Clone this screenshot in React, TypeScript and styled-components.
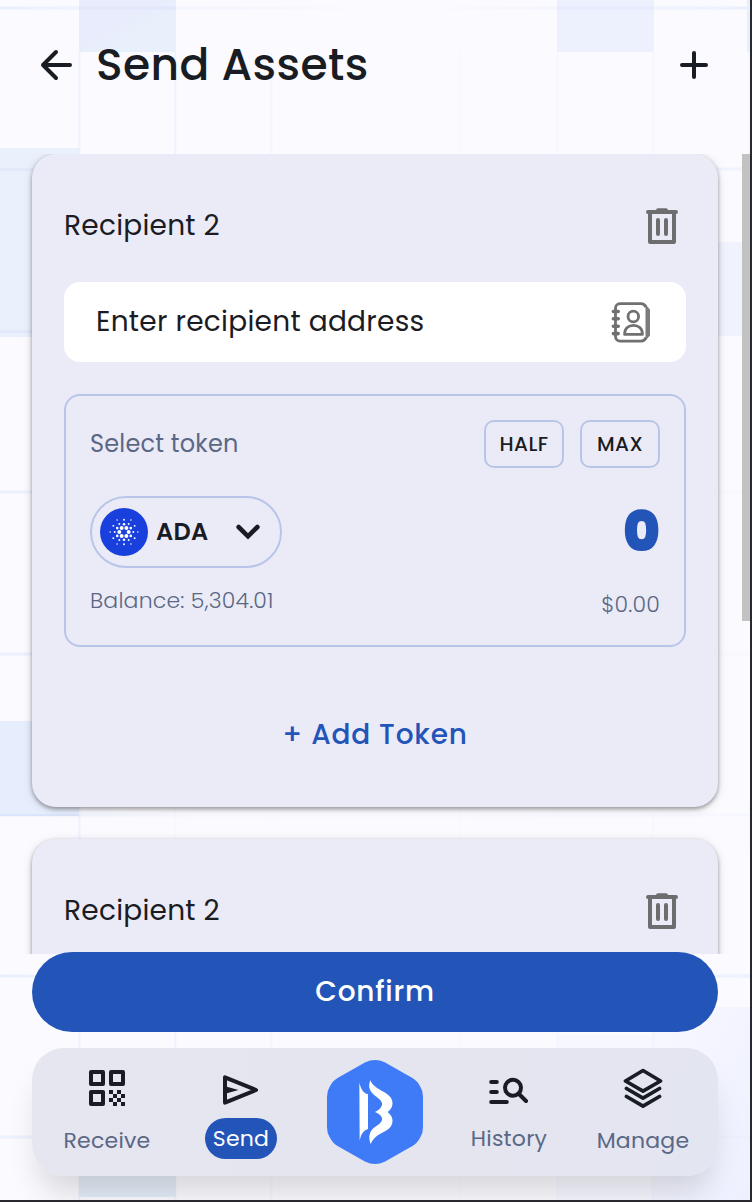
import React from "react";
import styled, { createGlobalStyle } from "styled-components";

const GlobalStyle = createGlobalStyle`
  * { box-sizing: border-box; }
  body { margin: 0; background: #27292e; overflow: hidden; }
`;

const ink = "#1a1c23";
const muted = "#5a6785";
const primary = "#2355b9";
const outline = "#b9c5e8";

const Frame = styled.div`
  width: 752px;
  height: 1202px;
  padding: 0 2px 2px 0;
  background: #27292e;
  font-family: Poppins, "Open Sans", sans-serif;
  color: ${ink};
`;

const Screen = styled.main`
  position: relative;
  display: flex;
  flex-direction: column;
  width: 750px;
  height: 1200px;
  overflow: hidden;
  background: #fafaff;
  isolation: isolate;
`;

const Backdrop = styled.svg`
  position: absolute;
  inset: 0;
  z-index: -1;
`;

const Text = styled.span<{ $size: number; $weight?: number; $track?: number; $color?: string }>`
  font-size: ${(p) => p.$size}px;
  font-weight: ${(p) => p.$weight ?? 400};
  letter-spacing: ${(p) => p.$track ?? 0}px;
  color: ${(p) => p.$color ?? ink};
  line-height: 1.5;
  white-space: nowrap;
`;

const Header = styled.header`
  display: flex;
  align-items: center;
  flex: 0 0 154px;
  padding: 0 40px 24px;
`;

const Title = styled.h1`
  flex: 1;
  margin: 0 0 0 23px;
  font-size: 44px;
  font-weight: 500;
  letter-spacing: 0.4px;
  line-height: 66px;
`;

const IconButton = styled.button`
  display: flex;
  padding: 0;
  border: 0;
  background: none;
  color: inherit;
`;

const ScrollArea = styled.section`
  display: flex;
  justify-content: space-between;
  flex: 0 0 800px;
  overflow: hidden;
`;

const CardList = styled.div`
  display: flex;
  flex-direction: column;
  gap: 32px;
  width: 686px;
  margin-left: 32px;
`;

const ScrollThumb = styled.div`
  width: 8px;
  height: 467px;
  background: #c2c2c2;
`;

const Card = styled.article`
  flex: 0 0 653px;
  display: flex;
  flex-direction: column;
  padding: 40px 32px 0;
  border-radius: 24px;
  background: #ebebf7;
  box-shadow: 0 2px 4px rgba(0, 0, 0, 0.36), 0 2px 12px rgba(0, 0, 0, 0.1);
`;

const CardHead = styled.div`
  display: flex;
  align-items: center;
  justify-content: space-between;
  height: 64px;
  padding-right: 8px;
  margin-bottom: 24px;
`;

const AddressField = styled.div`
  display: flex;
  align-items: center;
  justify-content: space-between;
  height: 80px;
  padding: 0 34px 0 32px;
  border-radius: 16px;
  background: #fff;
`;

const TokenBox = styled.div`
  display: flex;
  flex-direction: column;
  height: 253px;
  margin-top: 32px;
  padding: 24px;
  border: 2px solid ${outline};
  border-radius: 16px;
`;

const Row = styled.div<{ $height: number; $top?: number }>`
  display: flex;
  align-items: center;
  justify-content: space-between;
  height: ${(p) => p.$height}px;
  margin-top: ${(p) => p.$top ?? 0}px;
`;

const Presets = styled.div`
  display: flex;
  gap: 16px;
`;

const PresetButton = styled.button`
  display: flex;
  align-items: center;
  justify-content: center;
  width: 80px;
  height: 48px;
  padding: 0;
  border: 2px solid ${outline};
  border-radius: 10px;
  background: none;
  font: inherit;
`;

const TokenSelect = styled.button`
  display: flex;
  align-items: center;
  width: 192px;
  height: 72px;
  padding: 0 20px 0 8px;
  border: 2px solid ${outline};
  border-radius: 36px;
  background: none;
  font: inherit;
`;

const TokenName = styled.span`
  flex: 1;
  display: flex;
  padding-left: 8px;
`;

const AddToken = styled.button`
  align-self: center;
  display: flex;
  align-items: center;
  height: 64px;
  margin-top: 56px;
  padding: 0;
  border: 0;
  background: none;
  font: inherit;
`;

const Confirm = styled.button`
  display: flex;
  align-items: center;
  justify-content: center;
  flex: 0 0 80px;
  margin: -2px 32px 16px;
  padding: 0;
  border: 0;
  border-radius: 40px;
  background: ${primary};
  font: inherit;
  z-index: 1;
`;

const NavBar = styled.nav`
  display: grid;
  grid-template-columns: repeat(5, 134px);
  justify-content: center;
  flex: 0 0 128px;
  margin: 0 32px;
  border-radius: 32px;
  background: linear-gradient(100deg, #e5e6f0, #e5e5ef 60%, #e3e5f1);
  box-shadow: 0 24px 32px -8px rgba(0, 0, 0, 0.15);
`;

const NavItem = styled.a<{ $drop?: number }>`
  display: flex;
  flex-direction: column;
  align-items: center;
  padding-top: ${(p) => 20 + (p.$drop ?? 0)}px;
`;

const NavLabel = styled.span<{ $active?: boolean; $top: number }>`
  display: flex;
  align-items: center;
  justify-content: center;
  width: ${(p) => (p.$active ? "72px" : "auto")};
  height: 41px;
  margin-top: ${(p) => p.$top}px;
  border-radius: 20.5px;
  background: ${(p) => (p.$active ? primary : "none")};
`;

const NavLogo = styled.a`
  display: flex;
  justify-content: center;
  padding-top: 12px;
`;

function GridArt() {
  const columns = [79, 175, 271, 460, 557, 653, 749];
  const columnStrength = [0.9, 0.8, 0.45, 0.2, 0.35, 0.5, 0.5];
  const rows = [8, 169, 492, 654, 815, 976, 1137];
  const rightStrength = [1, 0.7, 0.15, 0.15, 0.25, 0.9, 0.9];
  return (
    <Backdrop width="750" height="1200" viewBox="0 0 750 1200">
      <defs>
        <linearGradient id="cell" x1="0" y1="0" x2="1" y2="1">
          <stop offset="0.4" stopColor="#e8ecfc" />
          <stop offset="0.6" stopColor="#e8f0fb" />
        </linearGradient>
        <linearGradient id="fadeLeft" x1="0" y1="0" x2="1" y2="0">
          <stop offset="0" stopColor="#ebf0fd" />
          <stop offset="0.4" stopColor="#ebf0fd" stopOpacity="0.6" />
          <stop offset="1" stopColor="#ebf0fd" stopOpacity="0" />
        </linearGradient>
        <linearGradient id="fadeRight" x1="0" y1="0" x2="1" y2="0">
          <stop offset="0" stopColor="#ebf0fd" stopOpacity="0" />
          <stop offset="0.6" stopColor="#ebf0fd" stopOpacity="0.6" />
          <stop offset="1" stopColor="#ebf0fd" />
        </linearGradient>
        <linearGradient id="corner" x1="0" y1="0" x2="1" y2="1">
          <stop offset="0" stopColor="#f8f8ff" />
          <stop offset="1" stopColor="#edf0ff" />
        </linearGradient>
      </defs>
      <rect x="557" y="1035" width="193" height="165" fill="#f7f7ff" />
      <rect x="651" y="1007" width="99" height="193" fill="url(#corner)" />
      {columns.map((x, i) => (
        <g key={x} fill="#eff2fe" opacity={columnStrength[i]}>
          <rect x={x - 1} y="52" width="2.5" height="110" />
          <rect x={x - 1} y="800" width="2.5" height="50" opacity={i === 0 ? 1 : 0.2} />
          <rect x={x - 1} y="1020" width="2.5" height="180" />
        </g>
      ))}
      {rows.map((y, i) => (
        <g key={y}>
          <rect y={y - 1.5} width={y === 815 ? 200 : 375} height="3" fill="url(#fadeLeft)" />
          <rect x="420" y={y - 1.5} width="330" height="3" fill="url(#fadeRight)" opacity={rightStrength[i]} />
        </g>
      ))}
      <rect x="79" width="97" height="52" fill="url(#cell)" />
      <rect x="79" y="6.5" width="97" height="3" fill="#e0e7fa" />
      <rect x="557" width="97" height="52" fill="#edf1fe" />
      <rect x="557" y="6.5" width="97" height="3" fill="#e5ebfd" />
      <rect x="747" width="3" height="52" fill="#e6effd" />
      <rect y="148" width="80" height="189" fill="#eaf0fc" />
      <rect y="168" width="80" height="3" fill="#e1e9fb" />
      <rect y="330" width="80" height="3" fill="#e1e9fb" />
      <rect x="700" y="242" width="50" height="94" fill="#f0f2fe" />
      <rect y="721" width="79" height="95" fill="#e6edfc" />
      <rect y="814" width="79" height="2" fill="#dae4fb" />
      <rect x="79" y="1110" width="97" height="87" fill="#e3edf8" />
    </Backdrop>
  );
}

function BackIcon() {
  return (
    <svg width="33" height="32" viewBox="0 0 33 32" fill="none" stroke={ink} strokeWidth="4" strokeLinecap="round" strokeLinejoin="round">
      <path d="M30 16H3M16 3 3 16 16 29" />
    </svg>
  );
}

function PlusIcon() {
  return (
    <svg width="32" height="32" viewBox="0 0 32 32" stroke={ink} strokeWidth="4" strokeLinecap="round">
      <path d="M16 4v24M4 16h24" />
    </svg>
  );
}

function TrashIcon() {
  return (
    <svg width="32" height="36" viewBox="0 0 32 36" fill="none" stroke="#6d6d70" strokeWidth="4" strokeLinecap="round" strokeLinejoin="round">
      <path d="M2 4h28M12 2.3h8" />
      <path d="M4 4v30h24V4M12 12v14M20 12v14" />
    </svg>
  );
}

function ContactsIcon() {
  return (
    <svg width="42" height="42" viewBox="0 0 42 42" fill="none" stroke="#707070" strokeWidth="2.8" strokeLinejoin="round">
      <path d="M35.5 3.5 40 8.5v26l-4.500 5Z" fill="#7c7c7c" stroke="none" />
      <path d="M36 6.2C35 3.5 33.5 2.6 31 2.600H10a4.500 4.500 0 0 0-4.500 4.500v28.500a4.500 4.500 0 0 0 4.500 4.500h21c2.500 0 4-1 5-3.600" />
      <path d="M3.4 10.5h4.800M3.4 17.700h4.800M3.4 25.200h4.800M3.4 32.600h4.800" strokeWidth="3.6" strokeLinecap="round" />
      <circle cx="23.3" cy="15.5" r="5.3" />
      <path d="M14.6 33.4c0-6 4-9 8.900-9s8.900 3 8.900 9Z" />
    </svg>
  );
}

function ring(radius: number, size: number, offset: number) {
  return Array.from({ length: 6 }, (_, i) => {
    const a = ((offset + i * 60) * Math.PI) / 180;
    return <circle key={`${radius}-${i}`} cx={24 + radius * Math.cos(a)} cy={24 + radius * Math.sin(a)} r={size} />;
  });
}

function CardanoIcon() {
  return (
    <svg width="48" height="48" viewBox="0 0 48 48" fill="#fff">
      <circle cx="24" cy="24" r="24" fill="#1940dd" />
      {ring(4.7, 2, 0)}
      {ring(7.8, 1.3, 30)}
      {ring(9.3, 0.95, 0)}
      {ring(12.3, 0.95, 30)}
      {ring(13.8, 0.75, 0)}
    </svg>
  );
}

function ChevronIcon() {
  return (
    <svg width="24" height="16" viewBox="0 0 24 16" fill="none" stroke={ink} strokeWidth="4.6" strokeLinecap="round">
      <path d="M2.6 3 12 12.3 21.4 3" />
    </svg>
  );
}

function QrIcon() {
  const cells = [0, 1, 2, 3].flatMap((r) => [0, 2].map((c) => [c + (r % 2), r]));
  return (
    <svg width="40" height="40" viewBox="0 0 40 40" fill="none" stroke={ink} strokeWidth="4" strokeLinejoin="round">
      <path d="M4 4h12v12H4ZM24 4h12v12H24ZM4 24h12v12H4Z" />
      {cells.map(([c, r]) => (
        <rect key={`${c}${r}`} x={22 + c * 4} y={22 + r * 4} width="4" height="4" fill={ink} stroke="none" />
      ))}
    </svg>
  );
}

function SendIcon() {
  return (
    <svg width="40" height="40" viewBox="0 0 40 40" fill="none" stroke={ink} strokeWidth="4" strokeLinejoin="round">
      <path d="M4 7.3v25.400L35 20Z" />
      <path d="M5 16.5 17.5 20 5 23.5Z" fill={ink} stroke="none" />
    </svg>
  );
}

function HistoryIcon() {
  return (
    <svg width="40" height="40" viewBox="0 0 40 40" fill="none" stroke={ink} strokeWidth="4" strokeLinecap="round">
      <path d="M2.2 12h5.600M2.2 22h5.600M2.2 32h15.600M29.5 23.5 37 31" />
      <circle cx="24" cy="17.7" r="8" />
    </svg>
  );
}

function LayersIcon() {
  return (
    <svg width="40" height="40" viewBox="0 0 40 40" fill="none" stroke={ink} strokeWidth="3.7" strokeLinecap="round" strokeLinejoin="round">
      <path d="M20 2.5 37.5 13 20 23.2 2.5 13Z" />
      <path d="M3.5 20.5 20 30.2l16.500-9.700M3.5 28.5 20 38.2l16.500-9.700" />
    </svg>
  );
}

function BrandLogo() {
  return (
    <svg width="96" height="104" viewBox="81 60 288 312">
      <path fill="#407bf7" d="M196 67Q225 53 254 67L336 113Q352 122 361 140Q369 152 369 170V262Q369 280 361 292Q352 310 336 319L254 365Q225 379 196 365L114 319Q98 310 89 292Q81 280 81 262V170Q81 152 89 140Q98 122 114 113Z" />
      <path fill="#fff" d="M178 128C184 150 190 158 204 163V267C190 272 183 282 179 303Z" />
      <path fill="#fff" d="M211 121C219 142 243 150 260 161C282 175 284 200 263 216C284 232 282 258 260 271C243 281 222 288 212 312C204 290 208 272 226 260C241 251 248 243 246 234C243 225 233 220 225 216C236 211 244 204 246 195C248 185 238 177 226 168C209 155 203 141 211 121Z" />
    </svg>
  );
}

function RecipientCard() {
  return (
    <Card>
      <CardHead>
        <Text $size={28} $track={0.25}>Recipient 2</Text>
        <IconButton><TrashIcon /></IconButton>
      </CardHead>
      <AddressField>
        <Text $size={28} $track={0.28}>Enter recipient address</Text>
        <IconButton><ContactsIcon /></IconButton>
      </AddressField>
      <TokenBox>
        <Row $height={48}>
          <Text $size={24} $track={0.2} $color={muted}>Select token</Text>
          <Presets>
            <PresetButton><Text $size={20} $weight={500} $track={0.4}>HALF</Text></PresetButton>
            <PresetButton><Text $size={20} $weight={500} $track={0.4}>MAX</Text></PresetButton>
          </Presets>
        </Row>
        <Row $height={72} $top={28}>
          <TokenSelect>
            <CardanoIcon />
            <TokenName><Text $size={24} $weight={600} $track={0.25}>ADA</Text></TokenName>
            <ChevronIcon />
          </TokenSelect>
          <Text $size={56} $weight={900} $color={primary}>0</Text>
        </Row>
        <Row $height={64}>
          <Text $size={22} $weight={300} $track={0.2} $color={muted}>Balance: 5,304.01</Text>
          <Row $height={64} $top={8}>
            <Text $size={22} $weight={300} $track={0.2} $color={muted}>$0.00</Text>
          </Row>
        </Row>
      </TokenBox>
      <AddToken><Text $size={28} $weight={500} $track={0.8} $color={primary}>+ Add Token</Text></AddToken>
    </Card>
  );
}

export default function App() {
  return (
    <Frame>
      <GlobalStyle />
      <Screen>
        <GridArt />
        <Header>
          <IconButton><BackIcon /></IconButton>
          <Title>Send Assets</Title>
          <IconButton><PlusIcon /></IconButton>
        </Header>
        <ScrollArea>
          <CardList>
            <RecipientCard />
            <RecipientCard />
          </CardList>
          <ScrollThumb />
        </ScrollArea>
        <Confirm><Text $size={28} $weight={500} $track={0.75} $color="#fff">Confirm</Text></Confirm>
        <NavBar>
          <NavItem>
            <QrIcon />
            <NavLabel $top={12}><Text $size={22} $track={0.22} $color={muted}>Receive</Text></NavLabel>
          </NavItem>
          <NavItem $drop={2}>
            <SendIcon />
            <NavLabel $active $top={8}><Text $size={22} $track={0.22} $color="#fff">Send</Text></NavLabel>
          </NavItem>
          <NavLogo><BrandLogo /></NavLogo>
          <NavItem $drop={2}>
            <HistoryIcon />
            <NavLabel $top={8}><Text $size={22} $track={0.22} $color={muted}>History</Text></NavLabel>
          </NavItem>
          <NavItem>
            <LayersIcon />
            <NavLabel $top={12}><Text $size={22} $track={0.22} $color={muted}>Manage</Text></NavLabel>
          </NavItem>
        </NavBar>
      </Screen>
    </Frame>
  );
}
